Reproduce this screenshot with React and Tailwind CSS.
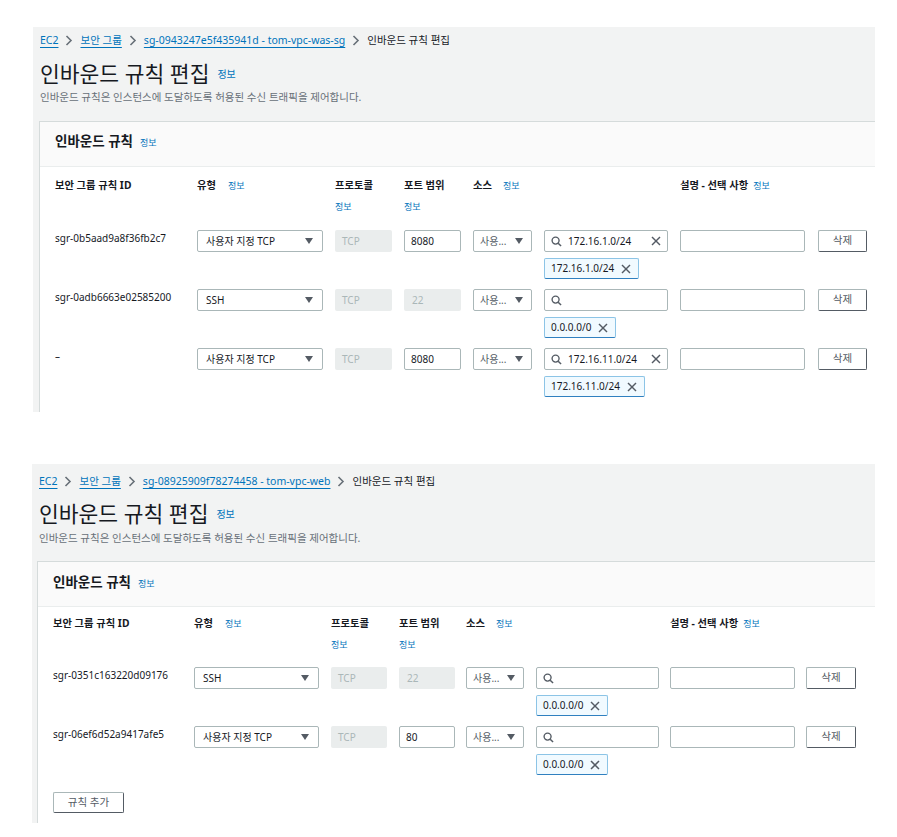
import React from "react";

const TOP = {
  wrap: "ml-[33px] w-[842px] mt-[27px]",
  crumb: "pt-[5px] pl-[7px]",
  title: "mt-[12px] pl-[7px]",
  descText: "mt-[1px] pl-[7px] pb-[16px]",
  panel: "ml-[6px]",
  head: "pt-[10px] pl-[15px]",
  cols: "pt-[10px] pl-[15px] pb-[16px]",
  body: "pl-[15px] pb-[15px]",
  id: "w-[142px]",
  typeCell: "w-[138px]",
  type: "w-[126px]",
  protoCell: "w-[69px]",
  proto: "w-[57px]",
  portCell: "w-[69px]",
  port: "w-[57px]",
  srcCell: "w-[71px]",
  src: "w-[59px]",
  searchCell: "w-[136px]",
  search: "w-[124px]",
  descCell: "w-[138px]",
  desc: "w-[125px]",
  del: "w-[49px]",
};

const BOTTOM = {
  wrap: "ml-[32px] w-[843px] mt-[52px]",
  crumb: "pt-[9px] pl-[7px]",
  title: "mt-[11px] pl-[7px]",
  descText: "mt-[2px] pl-[7px] pb-[15px]",
  panel: "ml-[5px]",
  head: "pt-[11px] pl-[15px]",
  cols: "pt-[8px] pl-[15px] pb-[15px]",
  body: "pl-[15px] pb-[10px]",
  id: "w-[141px]",
  typeCell: "w-[137px]",
  type: "w-[125px]",
  protoCell: "w-[68px]",
  proto: "w-[56px]",
  portCell: "w-[67px]",
  port: "w-[56px]",
  srcCell: "w-[70px]",
  src: "w-[58px]",
  searchCell: "w-[134px]",
  search: "w-[123px]",
  descCell: "w-[136px]",
  desc: "w-[125px]",
  del: "w-[50px]",
};

function Chevron() {
  return (
    <svg width="8" height="11" viewBox="0 0 8 11" className="mx-[7px] shrink-0">
      <polyline points="1.5,1 6,5.5 1.5,10" fill="none" stroke="#687078" strokeWidth="1.6" />
    </svg>
  );
}

function Caret() {
  return (
    <svg width="8" height="6" viewBox="0 0 8 6" className="shrink-0">
      <polygon points="0,0 8,0 4,6" fill="#545b64" />
    </svg>
  );
}

function SearchIcon() {
  return (
    <svg width="11" height="11" viewBox="0 0 12 12" className="shrink-0">
      <circle cx="5" cy="5" r="3.8" fill="none" stroke="#545b64" strokeWidth="1.5" />
      <line x1="7.8" y1="7.8" x2="11" y2="11" stroke="#545b64" strokeWidth="1.6" />
    </svg>
  );
}

function XIcon() {
  return (
    <svg width="10" height="10" viewBox="0 0 10 10" className="shrink-0">
      <line x1="1" y1="1" x2="9" y2="9" stroke="#545b64" strokeWidth="1.5" />
      <line x1="9" y1="1" x2="1" y2="9" stroke="#545b64" strokeWidth="1.5" />
    </svg>
  );
}

function Info({ size = "text-[9px]" }) {
  return <span className={`${size} text-[#0073bb] leading-none`}>정보</span>;
}

function Breadcrumb({ c, sg }) {
  return (
    <div className={`${c.crumb} flex items-center text-[10.5px] leading-[16px] whitespace-nowrap`}>
      <span className="text-[#0073bb] underline underline-offset-[3px]">EC2</span>
      <Chevron />
      <span className="text-[#0073bb] underline underline-offset-[3px]">보안 그룹</span>
      <Chevron />
      <span className="text-[#0073bb] underline underline-offset-[3px]">{sg}</span>
      <Chevron />
      <span className="text-[#16191f]">인바운드 규칙 편집</span>
    </div>
  );
}

function Rule({ c, rule }) {
  return (
    <div className="flex items-start">
      <div className={`${c.id} pt-[1px] text-[10px] leading-[14px] text-[#16191f]`}>{rule.id}</div>
      <div className={c.typeCell}>
        <div className={`${c.type} h-[22px] border border-[#aab7b8] rounded-[2px] bg-white flex items-center justify-between pl-[8px] pr-[9px] text-[10px] text-[#16191f]`}>
          <span>{rule.type}</span>
          <Caret />
        </div>
      </div>
      <div className={c.protoCell}>
        <div className={`${c.proto} h-[22px] rounded-[2px] bg-[#eaeded] flex items-center pl-[7px] text-[10px] text-[#aab7b8]`}>TCP</div>
      </div>
      <div className={c.portCell}>
        {rule.portFixed ? (
          <div className={`${c.port} h-[22px] rounded-[2px] bg-[#eaeded] flex items-center pl-[8px] text-[10px] text-[#aab7b8]`}>{rule.port}</div>
        ) : (
          <div className={`${c.port} h-[22px] border border-[#aab7b8] rounded-[2px] bg-white flex items-center pl-[6px] text-[10px] text-[#16191f]`}>{rule.port}</div>
        )}
      </div>
      <div className={c.srcCell}>
        <div className={`${c.src} h-[22px] border border-[#aab7b8] rounded-[2px] bg-white flex items-center justify-between pl-[6px] pr-[8px] text-[10px] text-[#545b64]`}>
          <span>사용...</span>
          <Caret />
        </div>
      </div>
      <div className={c.searchCell}>
        <div className={`${c.search} h-[22px] border border-[#aab7b8] rounded-[2px] bg-white flex items-center pl-[6px] pr-[6px] text-[10px] text-[#16191f]`}>
          <SearchIcon />
          <span className="ml-[6px] flex-1">{rule.search}</span>
          {rule.search && <XIcon />}
        </div>
        <div className="mt-[6px] flex">
          <div className="h-[21px] border border-[#8cc4e6] border-b-[#2f80c0] rounded-[2px] bg-[#f1faff] flex items-center pl-[6px] pr-[7px] text-[10px] text-[#16191f]">
            <span className="mr-[7px]">{rule.token}</span>
            <XIcon />
          </div>
        </div>
      </div>
      <div className={c.descCell}>
        <div className={`${c.desc} h-[22px] border border-[#aab7b8] rounded-[2px] bg-white`} />
      </div>
      <div className={`${c.del} h-[22px] border border-[#aab7b8] border-r-[#545b64] border-b-[#545b64] rounded-[2px] bg-white flex items-center justify-center text-[10.5px] text-[#545b64]`}>
        삭제
      </div>
    </div>
  );
}

function Section({ c, sg, rules, addButton }) {
  return (
    <div className={`${c.wrap} bg-[#f2f3f3] font-['Noto_Sans','Noto_Sans_CJK_KR',sans-serif]`}>
      <Breadcrumb c={c} sg={sg} />
      <div className={`${c.title} flex items-end`}>
        <h1 className="text-[21.5px] leading-[28px] text-[#16191f] font-normal">인바운드 규칙 편집</h1>
        <span className="ml-[8px] mb-[4px]"><Info size="text-[10px]" /></span>
      </div>
      <p className={`${c.descText} text-[10.5px] leading-[16px] text-[#687078] whitespace-nowrap`}>
        인바운드 규칙은 인스턴스에 도달하도록 허용된 수신 트래픽을 제어합니다.
      </p>
      <div className={`${c.panel} border-l border-t border-[#d5dbdb] bg-white`}>
        <div className={`${c.head} h-[45px] bg-[#fafafa] border-b border-[#eaeded] flex items-start`}>
          <h2 className="text-[13.5px] leading-[18px] font-bold text-[#16191f]">인바운드 규칙</h2>
          <span className="ml-[7px] mt-[6px] flex"><Info /></span>
        </div>
        <div className={`${c.cols} flex items-start text-[10.3px] leading-[16px] font-bold text-[#16191f] whitespace-nowrap`}>
          <div className={c.id}>보안 그룹 규칙 ID</div>
          <div className={`${c.typeCell} flex items-center`}>
            <span>유형</span>
            <span className="ml-[12px] font-normal flex"><Info /></span>
          </div>
          <div className={c.protoCell}>
            <div>프로토콜</div>
            <div className="mt-[5px] font-normal leading-[16px]"><Info /></div>
          </div>
          <div className={c.portCell}>
            <div>포트 범위</div>
            <div className="mt-[5px] font-normal leading-[16px]"><Info /></div>
          </div>
          <div className={`${c.srcCell} flex items-center`}>
            <span>소스</span>
            <span className="ml-[11px] font-normal flex"><Info /></span>
          </div>
          <div className={c.searchCell} />
          <div className="flex items-center">
            <span>설명 - 선택 사항</span>
            <span className="ml-[5px] font-normal flex"><Info /></span>
          </div>
        </div>
        <div className={`${c.body} flex flex-col gap-[10px]`}>
          {rules.map((r, i) => (
            <Rule key={i} c={c} rule={r} />
          ))}
          {addButton && (
            <div className="mt-[7px] w-[71px] h-[21px] border border-[#aab7b8] border-r-[#545b64] border-b-[#545b64] rounded-[2px] bg-white flex items-center justify-center text-[10.5px] text-[#545b64]">
              규칙 추가
            </div>
          )}
        </div>
      </div>
    </div>
  );
}

const topRules = [
  { id: "sgr-0b5aad9a8f36fb2c7", type: "사용자 지정 TCP", port: "8080", search: "172.16.1.0/24", token: "172.16.1.0/24" },
  { id: "sgr-0adb6663e02585200", type: "SSH", port: "22", portFixed: true, search: "", token: "0.0.0.0/0" },
  { id: "–", type: "사용자 지정 TCP", port: "8080", search: "172.16.11.0/24", token: "172.16.11.0/24" },
];

const bottomRules = [
  { id: "sgr-0351c163220d09176", type: "SSH", port: "22", portFixed: true, search: "", token: "0.0.0.0/0" },
  { id: "sgr-06ef6d52a9417afe5", type: "사용자 지정 TCP", port: "80", search: "", token: "0.0.0.0/0" },
];

export default function App() {
  return (
    <div className="w-[897px] h-[837px] bg-white overflow-hidden pt-px">
      <div className="-mt-px">
        <Section c={TOP} sg="sg-0943247e5f435941d - tom-vpc-was-sg" rules={topRules} />
        <Section c={BOTTOM} sg="sg-08925909f78274458 - tom-vpc-web" rules={bottomRules} addButton />
      </div>
    </div>
  );
}
